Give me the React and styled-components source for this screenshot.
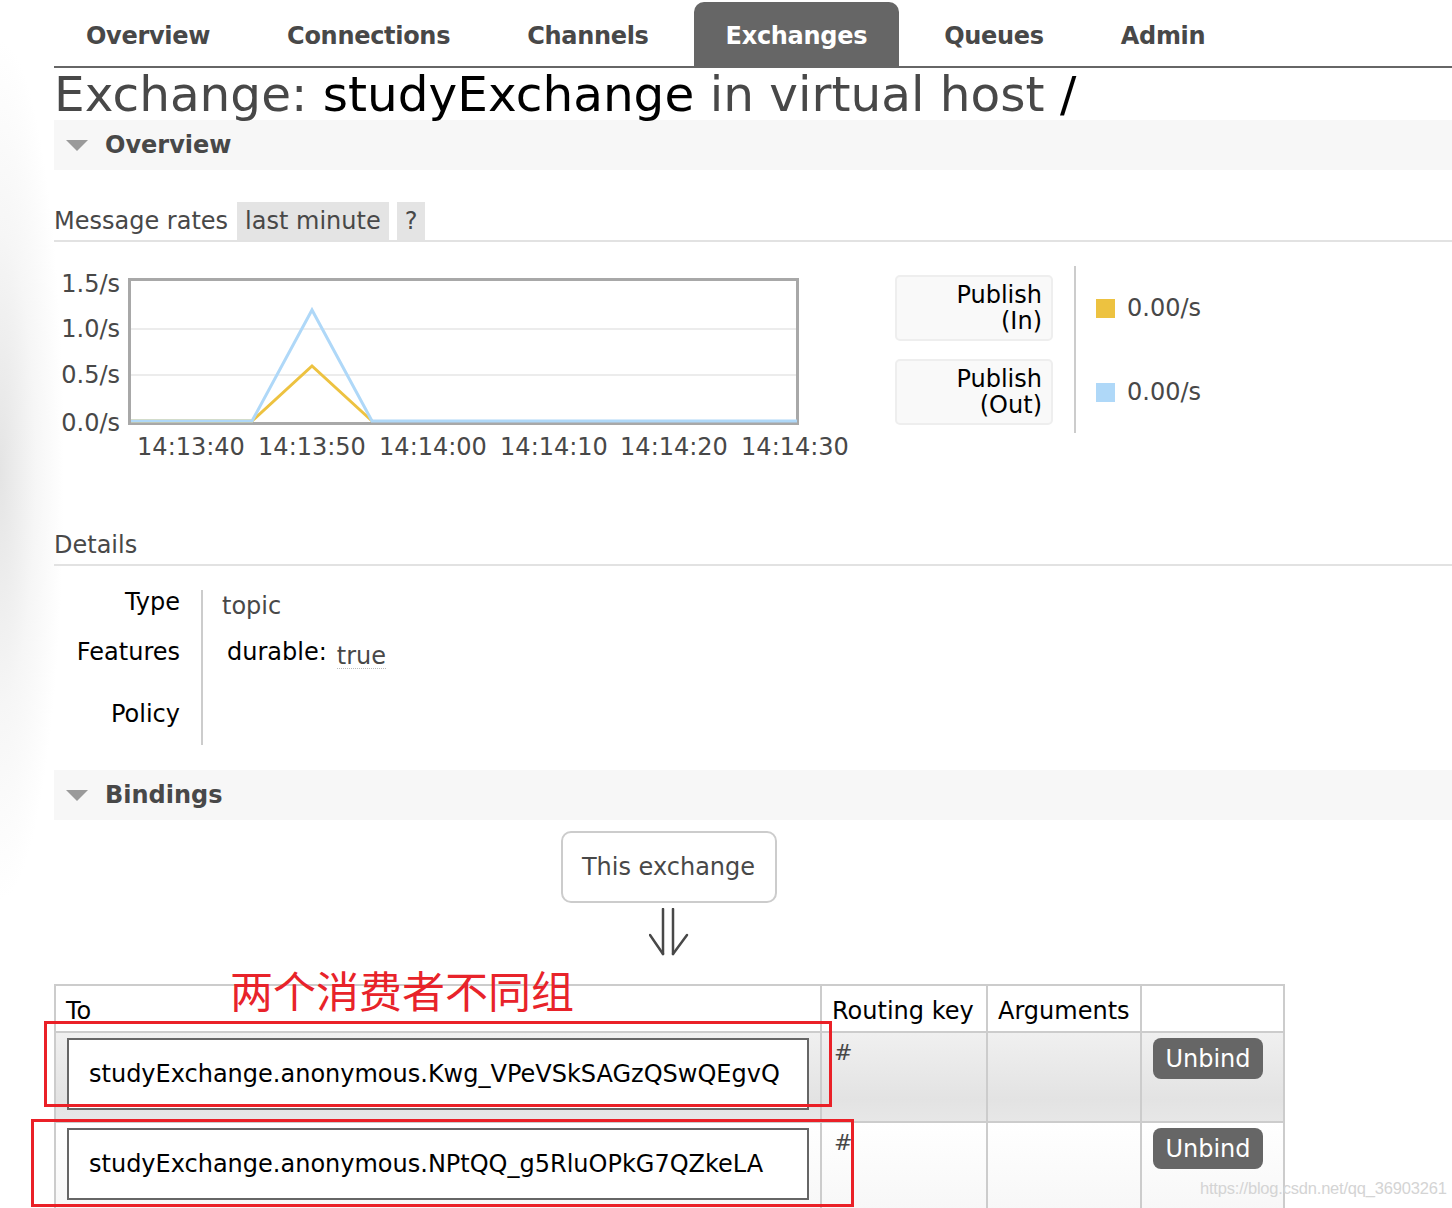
import React from 'react';
import styled, { createGlobalStyle } from 'styled-components';

const Global = createGlobalStyle`
  html, body { margin: 0; padding: 0; }
  body {
    width: 1452px;
    height: 1208px;
    overflow: hidden;
    background: #fff;
    font-family: "DejaVu Sans", Verdana, sans-serif;
    color: #484848;
  }
`;

const Page = styled.div`
  position: relative;
  height: 1208px;
  padding-left: 54px;
  box-sizing: border-box;
  background: radial-gradient(ellipse 64px 430px at 0 470px, #e4e4e4 0%, rgba(240,240,240,0.6) 55%, rgba(255,255,255,0) 100%);
`;

const Nav = styled.nav`
  display: flex;
  align-items: flex-end;
  height: 66px;
  border-bottom: 2px solid #666;
`;

const Tab = styled.a`
  display: flex;
  align-items: center;
  box-sizing: border-box;
  height: 64px;
  padding: 4px 32px 0;
  margin-right: 13px;
  font-size: 24px;
  letter-spacing: -0.3px;
  font-weight: bold;
  color: ${p => (p.$active ? '#fff' : '#484848')};
  background: ${p => (p.$active ? '#666' : 'transparent')};
  border-radius: 10px 10px 0 0;
`;

const Title = styled.h1`
  margin: 0;
  font-size: 48.5px;
  line-height: 52px;
  font-weight: normal;
  color: #484848;
  white-space: nowrap;
`;

const Name = styled.span`
  color: #000;
`;

const SectionHeader = styled.div`
  display: flex;
  align-items: center;
  height: 50px;
  margin-top: ${p => p.$top || 0}px;
  padding-left: 12px;
  background: #f7f7f7;
  font-size: 24px;
  font-weight: bold;
  color: #484848;
`;

const Caret = styled.span`
  width: 0;
  height: 0;
  border-left: 11px solid transparent;
  border-right: 11px solid transparent;
  border-top: 11px solid #9a9a9a;
  margin-right: 17px;
`;

const SubHeading = styled.div`
  display: flex;
  align-items: stretch;
  height: 38px;
  margin-top: ${p => p.$top}px;
  border-bottom: 2px solid #e2e2e2;
  font-size: 24px;
  line-height: 38px;
  color: #484848;
`;

const Chip = styled.span`
  background: #e4e4e4;
  padding: 0 ${p => p.$pad}px;
  margin-left: ${p => p.$gap}px;
`;

const ChartRow = styled.div`
  display: flex;
  margin-top: 24px;
  height: 200px;
`;

const Legend = styled.div`
  display: flex;
  margin-left: 41px;
  height: 167px;
`;

const LegendLabels = styled.div`
  display: flex;
  flex-direction: column;
  gap: 18px;
  padding-top: 9px;
  width: 158px;
`;

const LegendBox = styled.div`
  height: 66px;
  box-sizing: border-box;
  border: 2px solid #eee;
  border-radius: 5px;
  background: #f9f9f9;
  display: flex;
  flex-direction: column;
  justify-content: center;
  align-items: flex-end;
  padding-right: 9px;
  font-size: 24px;
  line-height: 26px;
  color: #000;
`;

const LegendValues = styled.div`
  display: flex;
  flex-direction: column;
  gap: 18px;
  padding-top: 9px;
  margin-left: 21px;
  padding-left: 20px;
  border-left: 2px solid #ccc;
`;

const LegendValue = styled.div`
  height: 66px;
  display: flex;
  align-items: center;
  font-size: 24px;
  color: #484848;
`;

const Swatch = styled.span`
  width: 19px;
  height: 19px;
  background: ${p => p.$color};
  margin-right: 12px;
`;

const Details = styled.div`
  display: grid;
  grid-template-columns: 147px auto;
  grid-template-rows: 50px 62px 43px;
  margin-top: 24px;
  font-size: 24px;
  line-height: 24px;
`;

const DLabel = styled.div`
  text-align: right;
  color: #000;
  padding-right: 21px;
`;

const DValue = styled.div`
  border-left: 2px solid #ccc;
  padding-left: ${p => p.$left || 19}px;
  padding-top: ${p => p.$top || 0}px;
  color: #484848;
`;

const Feature = styled.span`
  color: #000;
`;

const Abbr = styled.span`
  color: #484848;
  border-bottom: 1px dotted #bbb;
  margin-left: 10px;
  position: relative;
  top: 4px;
  line-height: 24px;
  display: inline-block;
`;

const BindingsWrap = styled.div`
  width: 1229px;
  display: flex;
  flex-direction: column;
  align-items: center;
`;

const ThisExchange = styled.div`
  margin-top: 11px;
  width: 216px;
  height: 72px;
  box-sizing: border-box;
  border: 2px solid #ccc;
  border-radius: 10px;
  display: flex;
  align-items: center;
  justify-content: center;
  font-size: 24px;
  color: #484848;
`;

const ArrowSvg = styled.svg`
  display: block;
  margin-top: 5px;
`;

const Table = styled.table`
  margin-top: 28px;
  width: 1229px;
  table-layout: fixed;
  border-collapse: collapse;
  border: 2px solid #ccc;
  font-size: 24px;
  color: #000;
  align-self: stretch;
`;

const Col = styled.col`
  width: ${p => p.$w}px;
`;

const Th = styled.th`
  height: 47px;
  box-sizing: border-box;
  border: 2px solid #ccc;
  text-align: left;
  font-weight: normal;
  white-space: nowrap;
  overflow: hidden;
  padding: 4px 10px 0;
  vertical-align: middle;
  line-height: 24px;
`;

const Tr = styled.tr`
  background: ${p => (p.$alt ? 'linear-gradient(#f0f0f0, #e3e3e3 75%, #e7e7e7)' : 'linear-gradient(#fff, #f7f7f7)')};
`;

const Td = styled.td`
  height: 90px;
  box-sizing: border-box;
  border: 2px solid #ccc;
  vertical-align: top;
  padding: ${p => p.$pad || '5px 11px'};
`;

const QueueBox = styled.div`
  height: 72px;
  box-sizing: border-box;
  border: 2px solid #666;
  background: #fff;
  display: flex;
  align-items: center;
  padding-left: 20px;
  font-size: 24px;
  white-space: nowrap;
  color: #000;
`;

const Hash = styled.span`
  font-size: 22px;
  color: #484848;
  display: block;
  padding-top: 2px;
`;

const Button = styled.button`
  width: 110px;
  height: 41px;
  border: none;
  border-radius: 8px;
  background: #666;
  color: #fff;
  font-family: "DejaVu Sans", Verdana, sans-serif;
  font-size: 24px;
  padding: 0;
`;

const Note = styled.div`
  position: absolute;
  left: 230px;
  top: 962px;
  font-family: "Noto Sans CJK SC", sans-serif;
  font-size: 43px;
  line-height: 54px;
  color: #e8232a;
`;

const RedBox = styled.div`
  position: absolute;
  border: 3px solid #ea2027;
  box-sizing: border-box;
`;

const Watermark = styled.div`
  position: absolute;
  left: 1200px;
  top: 1179px;
  font-family: "Liberation Sans", sans-serif;
  font-size: 16.5px;
  letter-spacing: -0.2px;
  color: #d4d4d4;
`;

const tabs = ['Overview', 'Connections', 'Channels', 'Exchanges', 'Queues', 'Admin'];

function Chart() {
  const yl = [['1.5/s', 18], ['1.0/s', 63], ['0.5/s', 109], ['0.0/s', 157]];
  const xl = [['14:13:40', 137], ['14:13:50', 258], ['14:14:00', 379], ['14:14:10', 500], ['14:14:20', 620], ['14:14:30', 741]];
  return (
    <svg width="800" height="200" style={{ display: 'block' }}>
      <line x1="77" x2="744" y1="63" y2="63" stroke="#ececec" strokeWidth="2" />
      <line x1="77" x2="744" y1="109" y2="109" stroke="#ececec" strokeWidth="2" />
      <rect x="75.5" y="13.5" width="668" height="144" fill="none" stroke="#a8a8a8" strokeWidth="3" />
      <polyline points="77,155 198,155 258,100 318,155" fill="none" stroke="#edc240" strokeWidth="3" />
      <polyline points="77,155 198,155 258,44 318,155 743,155" fill="none" stroke="#afd8f8" strokeWidth="3" />
      {yl.map(([t, y]) => (
        <text key={t} x="66" y={y} textAnchor="end" dominantBaseline="central" fontSize="24" fill="#484848" fontFamily="DejaVu Sans, sans-serif">{t}</text>
      ))}
      {xl.map(([t, x]) => (
        <text key={t} x={x} y="181" textAnchor="middle" dominantBaseline="central" fontSize="24" fill="#484848" fontFamily="DejaVu Sans, sans-serif">{t}</text>
      ))}
    </svg>
  );
}

export default function App() {
  return (
    <>
      <Global />
      <Page>
        <Nav>
          {tabs.map(t => (
            <Tab key={t} $active={t === 'Exchanges'}>{t}</Tab>
          ))}
        </Nav>
        <Title>
          Exchange: <Name>studyExchange</Name> in virtual host <Name>/</Name>
        </Title>
        <SectionHeader><Caret />Overview</SectionHeader>
        <SubHeading $top={32}>
          Message rates
          <Chip $pad={8} $gap={9}>last minute</Chip>
          <Chip $pad={8} $gap={8}>?</Chip>
        </SubHeading>
        <ChartRow>
          <Chart />
          <Legend>
            <LegendLabels>
              <LegendBox><span>Publish</span><span>(In)</span></LegendBox>
              <LegendBox><span>Publish</span><span>(Out)</span></LegendBox>
            </LegendLabels>
            <LegendValues>
              <LegendValue><Swatch $color="#edc240" />0.00/s</LegendValue>
              <LegendValue><Swatch $color="#afd8f8" />0.00/s</LegendValue>
            </LegendValues>
          </Legend>
        </ChartRow>
        <SubHeading $top={60}>Details</SubHeading>
        <Details>
          <DLabel>Type</DLabel>
          <DValue $top={4}>topic</DValue>
          <DLabel>Features</DLabel>
          <DValue $left={24}><Feature>durable:</Feature><Abbr>true</Abbr></DValue>
          <DLabel>Policy</DLabel>
          <DValue />
        </Details>
        <SectionHeader $top={25}><Caret />Bindings</SectionHeader>
        <BindingsWrap>
          <ThisExchange>This exchange</ThisExchange>
          <ArrowSvg width="40" height="48" viewBox="0 0 40 48">
            <g stroke="#484848" strokeWidth="2.5" fill="none" strokeLinecap="round">
              <line x1="14" y1="1" x2="14" y2="46" />
              <line x1="24" y1="1" x2="24" y2="46" />
              <line x1="1" y1="27" x2="14" y2="46" />
              <line x1="38" y1="27" x2="24" y2="46" />
            </g>
          </ArrowSvg>
          <Table>
            <colgroup>
              <Col $w={766} />
              <Col $w={166} />
              <Col $w={154} />
              <Col $w={143} />
            </colgroup>
            <thead>
              <tr>
                <Th>To</Th>
                <Th>Routing key</Th>
                <Th>Arguments</Th>
                <Th></Th>
              </tr>
            </thead>
            <tbody>
              <Tr $alt>
                <Td><QueueBox>studyExchange.anonymous.Kwg_VPeVSkSAGzQSwQEgvQ</QueueBox></Td>
                <Td $pad="5px 12px"><Hash>#</Hash></Td>
                <Td />
                <Td><Button>Unbind</Button></Td>
              </Tr>
              <Tr>
                <Td><QueueBox>studyExchange.anonymous.NPtQQ_g5RluOPkG7QZkeLA</QueueBox></Td>
                <Td $pad="5px 12px"><Hash>#</Hash></Td>
                <Td />
                <Td><Button>Unbind</Button></Td>
              </Tr>
            </tbody>
          </Table>
        </BindingsWrap>
        <Note>两个消费者不同组</Note>
        <RedBox style={{ left: 44, top: 1021, width: 788, height: 86 }} />
        <RedBox style={{ left: 31, top: 1119, width: 823, height: 88 }} />
        <Watermark>https://blog.csdn.net/qq_36903261</Watermark>
      </Page>
    </>
  );
}
